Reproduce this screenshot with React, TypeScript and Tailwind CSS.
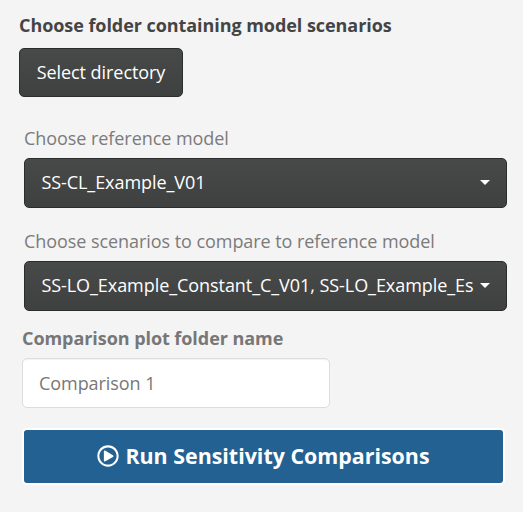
import React from "react";
import { FaRegPlayCircle } from "react-icons/fa";

const dark =
  "flex items-center border border-[#2b2d2c] rounded-[5px] bg-gradient-to-b from-[#484a49] to-[#3f4140] text-white text-[18px] tracking-[-0.06px]";

function Select({ label, value }: { label: string; value: string }) {
  return (
    <div>
      <div className="text-[18px] leading-[26px] tracking-[-0.06px] text-[#7b7b7b]">{label}</div>
      <button className={`${dark} mt-[7px] h-[50px] w-[483px] justify-between pb-[2px] pl-[16.4px] pr-4`}>
        <span className="whitespace-nowrap text-left">{value}</span>
        <span className="mt-px h-0 w-0 border-x-[5px] border-t-[5px] border-x-transparent border-t-white" />
      </button>
    </div>
  );
}

export default function App() {
  return (
    <main className="h-[512px] w-[523px] overflow-hidden bg-[#f4f4f4] pt-3 font-['Open_Sans','Noto_Sans',sans-serif]">
      <div className="pl-[19px]">
        <div className="text-[18px] font-bold leading-[26px] tracking-[-0.06px] text-[#444]">Choose folder containing model scenarios</div>
        <button className={`${dark} mt-[10px] h-[49px] w-[164px] justify-center`}>Select directory</button>
      </div>
      <div className="mt-7 flex flex-col gap-5 pl-6">
        <Select label="Choose reference model" value="SS-CL_Example_V01" />
        <Select label="Choose scenarios to compare to reference model" value="SS-LO_Example_Constant_C_V01, SS-LO_Example_Es" />
      </div>
      <div className="mt-[14px] pl-[22px]">
        <label className="block text-[18px] font-bold leading-[26px] tracking-[-0.06px] text-[#777]">Comparison plot folder name</label>
        <input className="mt-[7px] block h-[50px] w-[308px] rounded-[5px] border border-[#ddd] bg-white px-4 text-[18px] tracking-[-0.06px] text-[#777] shadow-[inset_0_1px_1px_rgba(0,0,0,0.06)]" defaultValue="Comparison 1" />
        <button className="mt-5 flex h-[57px] w-[483px] items-center justify-center gap-[6px] rounded-[5px] border-2 border-white bg-[#236192] text-[21.4px] font-bold text-white">
          <FaRegPlayCircle className="mb-[2px] h-[22px] w-[22px]" />
          <span>Run Sensitivity Comparisons</span>
        </button>
      </div>
    </main>
  );
}
